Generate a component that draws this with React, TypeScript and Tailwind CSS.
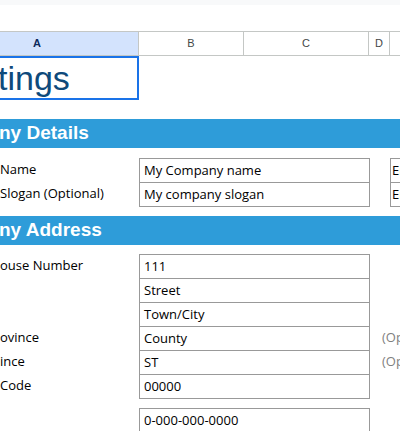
const body = { fontFamily: '"Open Sans", "Noto Sans", sans-serif' };
const arial = { fontFamily: '"Liberation Sans", Arial, sans-serif' };

function Box({ text, last }: { text: string; last?: boolean }) {
  return (
    <div
      className={`flex h-[24px] w-[231px] shrink-0 items-center border-x border-t border-[#999999] pl-[4px] text-[13px] text-black ${
        last ? "h-[25px] border-b" : ""
      }`}
    >
      {text}
    </div>
  );
}

function Row({
  label,
  value,
  last,
  side,
  note,
}: {
  label?: string;
  value: string;
  last?: boolean;
  side?: string;
  note?: string;
}) {
  return (
    <div className="flex items-start">
      <div className="flex h-[24px] w-[139px] shrink-0 items-center whitespace-nowrap text-[13px] text-black">
        {label}
      </div>
      <Box text={value} last={last} />
      <div className="flex h-[24px] w-[20px] shrink-0 items-center overflow-visible whitespace-nowrap pl-[12px] text-[13px] text-[#7f7f7f]">
        {note}
      </div>
      {side && (
        <div
          className={`flex h-[24px] flex-1 items-center overflow-hidden border-l border-t border-[#999999] pl-[1px] text-[13px] text-black ${
            last ? "h-[25px] border-b" : ""
          }`}
        >
          {side}
        </div>
      )}
    </div>
  );
}

function Bar({ title }: { title: string }) {
  return (
    <div
      className="flex h-[29px] items-center bg-[#2e9cd9] text-[19px] font-bold text-white"
      style={arial}
    >
      <span className="-ml-[1px]">{title}</span>
    </div>
  );
}

export default function App() {
  return (
    <div className="h-[431px] w-[400px] overflow-hidden bg-white" style={body}>
      <div className="h-[5px] bg-[#f8f9fa]" />
      <div className="h-[26px]" />

      {/* column headers */}
      <div
        className="flex h-[25px] border-y border-[#c4c7c5] text-[11px] text-[#444746]"
        style={arial}
      >
        <div className="flex w-[139px] shrink-0 items-center border-r border-[#c4c7c5] bg-[#d3e3fd] pl-[33px] font-bold text-[#0b2a5c]">
          A
        </div>
        <div className="flex w-[105px] shrink-0 items-center justify-center border-r border-[#c4c7c5]">
          B
        </div>
        <div className="flex w-[125px] shrink-0 items-center justify-center border-r border-[#c4c7c5]">
          C
        </div>
        <div className="flex w-[21px] shrink-0 items-center justify-center border-r border-[#c4c7c5]">
          D
        </div>
        <div className="flex-1" />
      </div>

      {/* title cell */}
      <div className="flex h-[44px]">
        <div
          className="flex w-[139px] items-center overflow-hidden border-y-2 border-r-2 border-[#1a73e8] text-[34px] text-[#0e4a7b]"
          style={arial}
        >
          <span className="-ml-[2px] leading-none">tings</span>
        </div>
      </div>

      <div className="h-[19px]" />
      <Bar title="ny Details" />
      <div className="h-[10px]" />
      <Row label="Name" value="My Company name" side="En" />
      <Row label="Slogan (Optional)" value="My company slogan" side="En" last />

      <div className="h-[9px]" />
      <Bar title="ny Address" />
      <div className="h-[9px]" />
      <Row label="ouse Number" value="111" />
      <Row value="Street" />
      <Row value="Town/City" />
      <Row label="ovince" value="County" note="(Optional)" />
      <Row label="ince" value="ST" note="(Optional)" />
      <Row label=" Code" value="00000" last />
      <div className="h-[9px]" />
      <Row value="0-000-000-0000" last />
    </div>
  );
}
